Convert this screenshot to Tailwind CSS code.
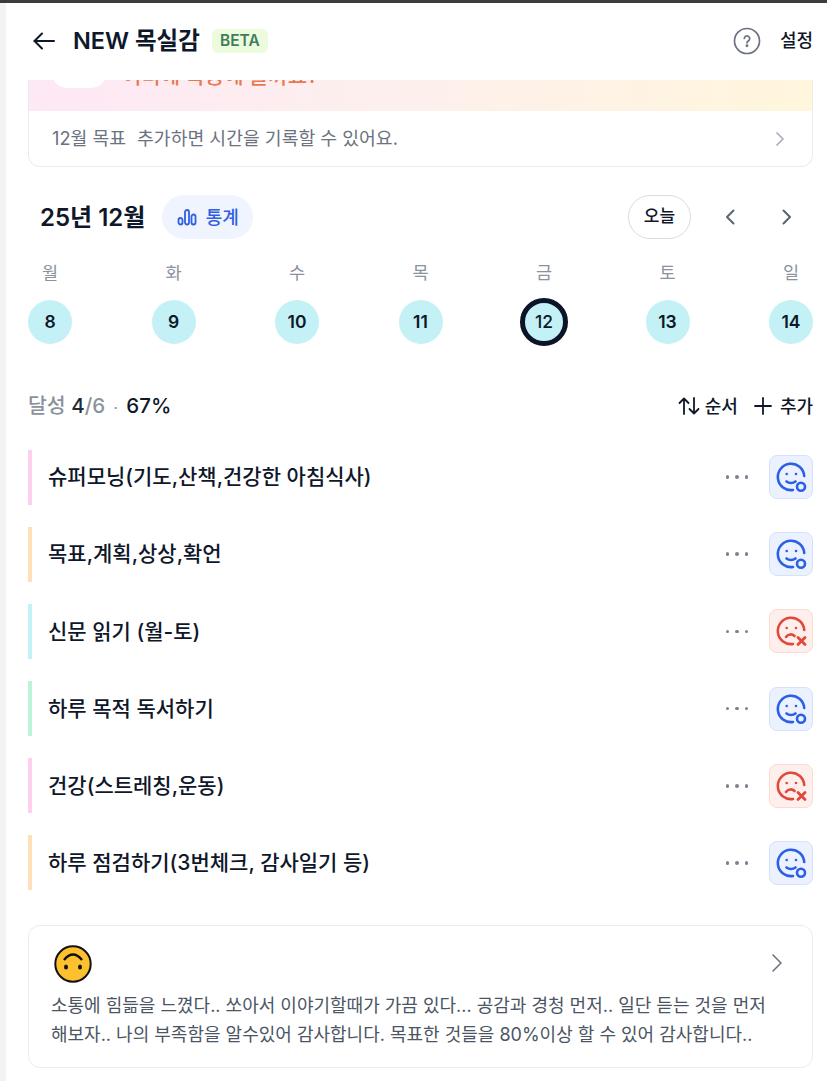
<!DOCTYPE html>
<html lang="ko">
<head>
    <meta charset="UTF-8">
    <meta name="viewport" content="width=device-width, initial-scale=1.0">
    <script src="https://cdn.jsdelivr.net/npm/@tailwindcss/browser@4"></script>
    <title>NEW 목실감</title>
</head>
<body class="font-['Inter','Noto_Sans_CJK_KR',sans-serif] text-[#0f172a]">
<div class="w-[827px] h-[1081px] overflow-hidden flex flex-col bg-white">
    <div class="h-[3px] bg-[#3c3c3c] shrink-0"></div>
    <div class="flex flex-1 min-h-0">
        <div class="w-[6px] bg-[#f1f3f5] shrink-0"></div>
        <main class="flex-1 min-w-0 pl-[22px] pr-[14px]">

            <!-- header -->
            <header class="h-[77px] pb-[1px] flex items-center">
                <svg class="ml-[4px]" width="24" height="24" viewBox="0 0 24 24" fill="none" stroke="#0f172a" stroke-width="2" stroke-linecap="round" stroke-linejoin="round"><path d="M22 12H2.500"/><path d="M10 4.500 2.500 12l7.500 7.500"/></svg>
                <h1 class="ml-[17px] text-[23.500px] font-semibold leading-none">NEW 목실감</h1>
                <span class="ml-[12px] w-[56px] h-[24px] rounded-md bg-[#ecfbdc] text-[#3f7d5c] text-[15.500px] font-semibold flex items-center justify-center">BETA</span>
                <svg class="ml-auto" width="28" height="28" viewBox="0 0 28 28" fill="none" stroke="#6b7280" stroke-width="1.700"><circle cx="14" cy="14" r="12.500"/><path d="M11.300 11.500a2.700 2.700 0 1 1 4.200 2.300c-.9.6-1.500 1-1.500 2" stroke-linecap="round"/><circle cx="14" cy="18.800" r=".6" fill="#6b7280"/></svg>
                <button class="ml-[19px] text-[18px] font-medium leading-none">설정</button>
            </header>

            <!-- goal card, scrolled under the header -->
            <section class="h-[87px] border border-t-0 border-[#e9ecef] rounded-b-xl overflow-hidden">
                <div class="h-[31px] overflow-hidden bg-gradient-to-r from-[#fde8f5] via-[#fdf0ec] to-[#fff6dc] flex">
                    <div class="ml-[23px] w-[54px] h-[30px] -mt-[22px] rounded-[16px] bg-white shrink-0"></div>
                    <p class="ml-[16px] -mt-[17px] text-[21px] leading-[26px] text-[#e8784f] font-medium whitespace-nowrap">어디에 목공에 쓸까요?</p>
                </div>
                <div class="h-[55px] flex items-center pl-[23px] pr-[27px] text-[18.250px] text-[#6b7280]">
                    <span>12월 목표</span>
                    <span class="ml-[11px]">추가하면 시간을 기록할 수 있어요.</span>
                    <svg class="ml-auto" width="10" height="16" viewBox="0 0 10 16" fill="none" stroke="#a8aeb8" stroke-width="1.700" stroke-linecap="round" stroke-linejoin="round"><path d="M2 2l6 6-6 6"/></svg>
                </div>
            </section>

            <!-- month -->
            <div class="mt-[28px] h-[44px] flex items-center">
                <h2 class="ml-[12px] mt-[1px] text-[24px] font-semibold leading-none">25년 12월</h2>
                <button class="ml-[17px] w-[91px] h-[44px] rounded-full bg-[#eff4ff] text-[#2f5fe3] text-[18px] font-medium flex items-center justify-center gap-[9px]">
                    <svg width="20" height="18" viewBox="0 0 20 18" fill="none" stroke="#2f5fe3" stroke-width="1.800"><rect x="1.500" y="10" width="4" height="6.500" rx="2"/><rect x="8" y="2" width="4" height="14.500" rx="2"/><rect x="14.500" y="6.500" width="4" height="10" rx="2"/></svg>
                    통계
                </button>
                <button class="ml-auto w-[63px] h-[44px] rounded-full border border-[#d9dce1] text-[17px] font-medium">오늘</button>
                <svg class="ml-[33px]" width="12" height="18" viewBox="0 0 12 18" fill="none" stroke="#5b6472" stroke-width="2" stroke-linecap="round" stroke-linejoin="round"><path d="M9.500 2.500 3 9l6.500 6.500"/></svg>
                <svg class="ml-[45px] mr-[20px]" width="12" height="18" viewBox="0 0 12 18" fill="none" stroke="#5b6472" stroke-width="2" stroke-linecap="round" stroke-linejoin="round"><path d="M2.500 2.500 9 9l-6.500 6.500"/></svg>
            </div>

            <!-- week -->
            <div class="mt-[22px] flex justify-between">
                <div class="w-[44px] flex flex-col items-center"><span class="h-[24px] text-[17.500px] leading-[24px] text-[#8b929c]">월</span><span class="mt-[15px] w-[44px] h-[44px] rounded-full bg-[#c4f1f6] flex items-center justify-center text-[17.500px] font-semibold">8</span></div>
                <div class="w-[44px] flex flex-col items-center"><span class="h-[24px] text-[17.500px] leading-[24px] text-[#8b929c]">화</span><span class="mt-[15px] w-[44px] h-[44px] rounded-full bg-[#c4f1f6] flex items-center justify-center text-[17.500px] font-semibold">9</span></div>
                <div class="w-[44px] flex flex-col items-center"><span class="h-[24px] text-[17.500px] leading-[24px] text-[#8b929c]">수</span><span class="mt-[15px] w-[44px] h-[44px] rounded-full bg-[#c4f1f6] flex items-center justify-center text-[17.500px] font-semibold">10</span></div>
                <div class="w-[44px] flex flex-col items-center"><span class="h-[24px] text-[17.500px] leading-[24px] text-[#8b929c]">목</span><span class="mt-[15px] w-[44px] h-[44px] rounded-full bg-[#c4f1f6] flex items-center justify-center text-[17.500px] font-semibold">11</span></div>
                <div class="w-[44px] flex flex-col items-center"><span class="h-[24px] text-[17.500px] leading-[24px] text-[#8b929c]">금</span><span class="mt-[13px] w-[48px] h-[48px] -mx-[2px] rounded-full bg-[#c4f1f6] border-[5px] border-[#0b1428] flex items-center justify-center text-[17.500px] font-medium">12</span></div>
                <div class="w-[44px] flex flex-col items-center"><span class="h-[24px] text-[17.500px] leading-[24px] text-[#8b929c]">토</span><span class="mt-[15px] w-[44px] h-[44px] rounded-full bg-[#c4f1f6] flex items-center justify-center text-[17.500px] font-semibold">13</span></div>
                <div class="w-[44px] flex flex-col items-center"><span class="h-[24px] text-[17.500px] leading-[24px] text-[#8b929c]">일</span><span class="mt-[15px] w-[44px] h-[44px] rounded-full bg-[#c4f1f6] flex items-center justify-center text-[17.500px] font-semibold">14</span></div>
            </div>

            <!-- progress -->
            <div class="mt-[47px] h-[26px] flex items-center">
                <p class="text-[20.500px] font-medium text-[#8b929c] whitespace-nowrap">달성 <span class="text-[#1f2937]">4</span>/6 <span class="ml-[3px] text-[14px]">·</span> <span class="ml-[3px] text-[#0f172a]">67%</span></p>
                <button class="ml-auto flex items-center gap-[4px] text-[18px] font-medium">
                    <svg width="24" height="20" viewBox="0 0 24 20" fill="none" stroke="#0f172a" stroke-width="1.800" stroke-linecap="round" stroke-linejoin="round"><path d="M7 18V2.500M2.500 7 7 2.500 11.500 7"/><path d="M17 2v15.500M12.500 13l4.500 4.500 4.500-4.500"/></svg>
                    순서
                </button>
                <button class="ml-[16px] flex items-center gap-[8px] text-[18px] font-medium">
                    <svg width="18" height="18" viewBox="0 0 18 18" fill="none" stroke="#0f172a" stroke-width="1.800" stroke-linecap="round"><path d="M9 1v16M1 9h16"/></svg>
                    추가
                </button>
            </div>

            <!-- habits -->
            <ul class="mt-[30.500px] flex flex-col gap-[22.200px]">
                <li class="h-[55px] flex items-center border-l-[4px] border-[#fdd0ee] pl-[16px]">
                    <span class="text-[21px] font-medium">슈퍼모닝(기도,산책,건강한 아침식사)</span>
                    <span class="ml-auto text-[#7b8290] flex gap-[6px]"><i class="w-[3.500px] h-[3.500px] rounded-full bg-current"></i><i class="w-[3.500px] h-[3.500px] rounded-full bg-current"></i><i class="w-[3.500px] h-[3.500px] rounded-full bg-current"></i></span>
                    <span class="ml-[21px] w-[44px] h-[44px] rounded-lg bg-[#ebf1fe] border border-[#d6e2fc] flex items-center justify-center">
                        <svg width="32" height="32" viewBox="0 0 32 32" fill="none" stroke="#2b5fe6" stroke-width="2.600" stroke-linecap="round"><path d="M18 29A13.200 13.200 0 1 1 29.200 15"/><path d="M11.500 20.500c2.500 2 6.500 2 9 0"/><circle cx="11.700" cy="13" r="1.300" fill="#2b5fe6" stroke="none"/><circle cx="21" cy="13" r="1.300" fill="#2b5fe6" stroke="none"/><circle cx="26" cy="25.700" r="4"/></svg>
                    </span>
                </li>
                <li class="h-[55px] flex items-center border-l-[4px] border-[#fee0b8] pl-[16px]">
                    <span class="text-[21px] font-medium">목표,계획,상상,확언</span>
                    <span class="ml-auto text-[#7b8290] flex gap-[6px]"><i class="w-[3.500px] h-[3.500px] rounded-full bg-current"></i><i class="w-[3.500px] h-[3.500px] rounded-full bg-current"></i><i class="w-[3.500px] h-[3.500px] rounded-full bg-current"></i></span>
                    <span class="ml-[21px] w-[44px] h-[44px] rounded-lg bg-[#ebf1fe] border border-[#d6e2fc] flex items-center justify-center">
                        <svg width="32" height="32" viewBox="0 0 32 32" fill="none" stroke="#2b5fe6" stroke-width="2.600" stroke-linecap="round"><path d="M18 29A13.200 13.200 0 1 1 29.200 15"/><path d="M11.500 20.500c2.500 2 6.500 2 9 0"/><circle cx="11.700" cy="13" r="1.300" fill="#2b5fe6" stroke="none"/><circle cx="21" cy="13" r="1.300" fill="#2b5fe6" stroke="none"/><circle cx="26" cy="25.700" r="4"/></svg>
                    </span>
                </li>
                <li class="h-[55px] flex items-center border-l-[4px] border-[#c4f1f6] pl-[16px]">
                    <span class="text-[21px] font-medium">신문 읽기 (월-토)</span>
                    <span class="ml-auto text-[#7b8290] flex gap-[6px]"><i class="w-[3.500px] h-[3.500px] rounded-full bg-current"></i><i class="w-[3.500px] h-[3.500px] rounded-full bg-current"></i><i class="w-[3.500px] h-[3.500px] rounded-full bg-current"></i></span>
                    <span class="ml-[21px] w-[44px] h-[44px] rounded-lg bg-[#feefec] border border-[#fcd9d2] flex items-center justify-center">
                        <svg width="32" height="32" viewBox="0 0 32 32" fill="none" stroke="#e2483a" stroke-width="2.600" stroke-linecap="round"><path d="M18 29A13.200 13.200 0 1 1 29.200 15"/><path d="M11 22c2-3 6-3.500 8.500-1"/><circle cx="11.700" cy="13" r="1.300" fill="#e2483a" stroke="none"/><circle cx="21" cy="13" r="1.300" fill="#e2483a" stroke="none"/><path d="M23 22.500l7 7M30 22.500l-7 7" stroke-width="2.800"/></svg>
                    </span>
                </li>
                <li class="h-[55px] flex items-center border-l-[4px] border-[#bdf3d6] pl-[16px]">
                    <span class="text-[21px] font-medium">하루 목적 독서하기</span>
                    <span class="ml-auto text-[#7b8290] flex gap-[6px]"><i class="w-[3.500px] h-[3.500px] rounded-full bg-current"></i><i class="w-[3.500px] h-[3.500px] rounded-full bg-current"></i><i class="w-[3.500px] h-[3.500px] rounded-full bg-current"></i></span>
                    <span class="ml-[21px] w-[44px] h-[44px] rounded-lg bg-[#ebf1fe] border border-[#d6e2fc] flex items-center justify-center">
                        <svg width="32" height="32" viewBox="0 0 32 32" fill="none" stroke="#2b5fe6" stroke-width="2.600" stroke-linecap="round"><path d="M18 29A13.200 13.200 0 1 1 29.200 15"/><path d="M11.500 20.500c2.500 2 6.500 2 9 0"/><circle cx="11.700" cy="13" r="1.300" fill="#2b5fe6" stroke="none"/><circle cx="21" cy="13" r="1.300" fill="#2b5fe6" stroke="none"/><circle cx="26" cy="25.700" r="4"/></svg>
                    </span>
                </li>
                <li class="h-[55px] flex items-center border-l-[4px] border-[#fdd0ee] pl-[16px]">
                    <span class="text-[21px] font-medium">건강(스트레칭,운동)</span>
                    <span class="ml-auto text-[#7b8290] flex gap-[6px]"><i class="w-[3.500px] h-[3.500px] rounded-full bg-current"></i><i class="w-[3.500px] h-[3.500px] rounded-full bg-current"></i><i class="w-[3.500px] h-[3.500px] rounded-full bg-current"></i></span>
                    <span class="ml-[21px] w-[44px] h-[44px] rounded-lg bg-[#feefec] border border-[#fcd9d2] flex items-center justify-center">
                        <svg width="32" height="32" viewBox="0 0 32 32" fill="none" stroke="#e2483a" stroke-width="2.600" stroke-linecap="round"><path d="M18 29A13.200 13.200 0 1 1 29.200 15"/><path d="M11 22c2-3 6-3.500 8.500-1"/><circle cx="11.700" cy="13" r="1.300" fill="#e2483a" stroke="none"/><circle cx="21" cy="13" r="1.300" fill="#e2483a" stroke="none"/><path d="M23 22.500l7 7M30 22.500l-7 7" stroke-width="2.800"/></svg>
                    </span>
                </li>
                <li class="h-[55px] flex items-center border-l-[4px] border-[#fee0b8] pl-[16px]">
                    <span class="text-[21px] font-medium">하루 점검하기(3번체크, 감사일기 등)</span>
                    <span class="ml-auto text-[#7b8290] flex gap-[6px]"><i class="w-[3.500px] h-[3.500px] rounded-full bg-current"></i><i class="w-[3.500px] h-[3.500px] rounded-full bg-current"></i><i class="w-[3.500px] h-[3.500px] rounded-full bg-current"></i></span>
                    <span class="ml-[21px] w-[44px] h-[44px] rounded-lg bg-[#ebf1fe] border border-[#d6e2fc] flex items-center justify-center">
                        <svg width="32" height="32" viewBox="0 0 32 32" fill="none" stroke="#2b5fe6" stroke-width="2.600" stroke-linecap="round"><path d="M18 29A13.200 13.200 0 1 1 29.200 15"/><path d="M11.500 20.500c2.500 2 6.500 2 9 0"/><circle cx="11.700" cy="13" r="1.300" fill="#2b5fe6" stroke="none"/><circle cx="21" cy="13" r="1.300" fill="#2b5fe6" stroke="none"/><circle cx="26" cy="25.700" r="4"/></svg>
                    </span>
                </li>
            </ul>

            <!-- diary -->
            <section class="mt-[34.500px] h-[143px] border border-[#e9ecef] rounded-xl pl-[22px] pr-[30px] pt-[19px]">
                <div class="flex items-center justify-between">
                    <svg class="ml-[3px]" width="38" height="38" viewBox="0 0 38 38"><circle cx="19" cy="19" r="17.700" fill="#fdc02f" stroke="#111" stroke-width="2"/><path d="M10 15Q19 4 28 15" fill="none" stroke="#111" stroke-width="2.400"/><ellipse cx="12" cy="22" rx="2" ry="2.500" fill="#111"/><ellipse cx="26" cy="22" rx="2" ry="2.500" fill="#111"/></svg>
                    <svg class="-mr-[1px] -mt-[2px]" width="12" height="20" viewBox="0 0 12 20" fill="none" stroke="#6b7280" stroke-width="1.600" stroke-linecap="round" stroke-linejoin="round"><path d="M2 2l8 8-8 8"/></svg>
                </div>
                <p class="mt-[8px] text-[18px] leading-[29px] text-[#4b5563] whitespace-nowrap">소통에 힘듦을 느꼈다.. 쏘아서 이야기할때가 가끔 있다... 공감과 경청 먼저.. 일단 듣는 것을 먼저<br>해보자.. 나의 부족함을 알수있어 감사합니다. 목표한 것들을 80%이상 할 수 있어 감사합니다..</p>
            </section>
        </main>
    </div>
</div>
</body>
</html>
